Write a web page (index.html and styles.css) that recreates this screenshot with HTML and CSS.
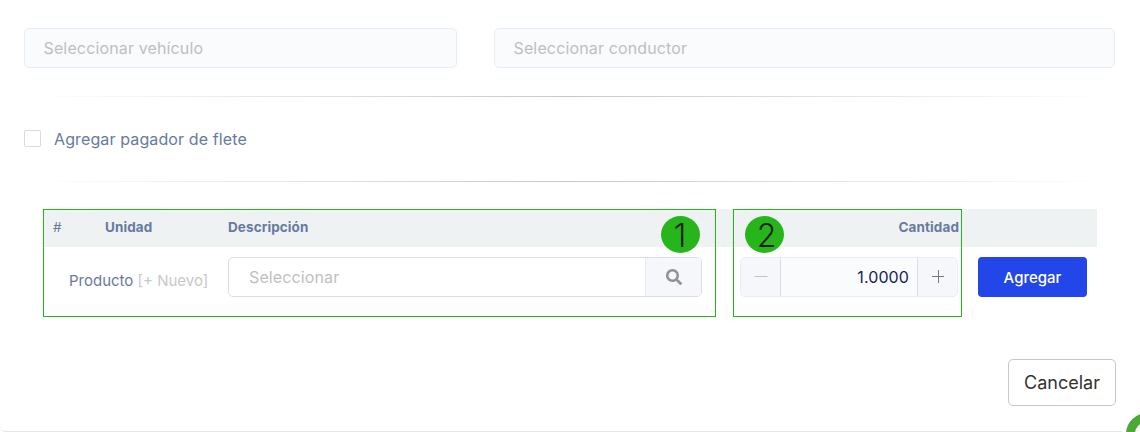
FILE: index.html
```html
<!DOCTYPE html>
<html lang="es">
<head>
<meta charset="utf-8">
<title>Agregar producto</title>
<link rel="stylesheet" href="styles.css">
</head>
<body>
<main class="panel">
  <div class="selectors">
    <div class="field">Seleccionar vehículo</div>
    <div class="field">Seleccionar conductor</div>
  </div>
  <hr class="rule">
  <label class="check"><span class="check-box"></span><span class="check-text">Agregar pagador de flete</span></label>
  <hr class="rule rule-second">
  <section class="items">
    <div class="row head">
      <span class="hash">#</span>
      <span>Unidad</span>
      <span class="col-desc">Descripción</span>
      <span class="col-qty">Cantidad</span>
    </div>
    <div class="row body">
      <span class="product">Producto <span class="new">[+ Nuevo]</span></span>
      <div class="search">
        <span class="search-text">Seleccionar</span>
        <span class="search-btn"><svg width="16" height="16" viewBox="0 0 512 512"><path fill="#8f9297" d="M505 442.700 405.300 343c-4.500-4.500-10.600-7-17-7H372c27.600-35.300 44-79.700 44-128C416 93.100 322.900 0 208 0S0 93.100 0 208s93.100 208 208 208c48.300 0 92.700-16.400 128-44v16.300c0 6.400 2.500 12.500 7 17l99.700 99.700c9.400 9.400 24.600 9.400 33.900 0l28.300-28.300c9.400-9.400 9.400-24.600.1-34zM208 336c-70.700 0-128-57.200-128-128 0-70.700 57.200-128 128-128 70.700 0 128 57.200 128 128 0 70.700-57.200 128-128 128z"/></svg></span>
      </div>
      <div class="stepper">
        <span class="step minus"><svg width="14" height="14" viewBox="0 0 14 14"><path d="M.5 6.500h13" stroke="#c0c3c7"/></svg></span>
        <span class="amount">1.0000</span>
        <span class="step plus"><svg width="14" height="14" viewBox="0 0 14 14"><path d="M1 6.500h12M7.500 0v13" stroke="#777b80"/></svg></span>
      </div>
      <div class="btn add">Agregar</div>
    </div>
    <div class="mark mark-one"><span class="badge">1</span></div>
    <div class="mark mark-two"><span class="badge">2</span></div>
  </section>
  <div class="actions"><div class="btn cancel">Cancelar</div></div>
</main>
<div class="corner"><span class="fab"></span></div>
</body>
</html>
```
FILE: styles.css
```css
* { box-sizing: border-box; }
html { overflow: hidden; }
body {
  margin: 0;
  width: 1140px;
  height: 432px;
  overflow: hidden;
  position: relative;
  background: #fff;
  color: #677a9f;
  font-family: Inter, "Liberation Sans", sans-serif;
  font-size: 16px;
}
svg { display: block; }
.panel {
  height: 432px;
  padding: 28px 25px 0 24px;
  border-bottom: 1px solid #e4e6ef;
  border-radius: 0 0 0 6px;
}
.selectors {
  display: grid;
  grid-template-columns: 433px 621px;
  gap: 37px;
}
.field {
  height: 40px;
  padding: 0 19px 0 18.5px;
  line-height: 39px;
  letter-spacing: .14px;
  border: 1px solid #e8eef7;
  border-radius: 5px;
  background: #fafbfd;
  color: #bfbfbf;
}
.rule {
  height: 1px;
  margin: 28px 0 0 9px;
  width: 1072px;
  border: 0;
  background: linear-gradient(to right, transparent, #c8c8c8, transparent);
}
.check {
  display: flex;
  gap: 13px;
  height: 20px;
  margin-top: 32px;
  line-height: 20px;
  letter-spacing: .12px;
}
.check-box {
  width: 17px;
  height: 17px;
  margin-top: 1px;
  border: 1px solid #d8d9e4;
  border-radius: 2px;
}
.rule-second { margin-top: 32px; }
.items {
  position: relative;
  width: 1054px;
  height: 108px;
  margin: 27px 0 0 19px;
}
.row { display: grid; }
.head {
  grid-template-columns: 52px 123px 500px 231px;
  height: 38px;
  padding-left: 10px;
  line-height: 36px;
  background: #eff2f3;
  font-size: 13.5px;
  font-weight: 700;
  letter-spacing: .1px;
}
.hash { font-weight: 400; }
.col-qty { text-align: right; }
.body {
  grid-template-columns: 159px 474px 218px 109px;
  padding: 10px 0 0 26px;
}
.product { font-size: 15px; line-height: 47px; }
.new { color: #c8c8c8; }
.search {
  display: flex;
  width: 474px;
  height: 40px;
  border: 1px solid #dcdde6;
  border-radius: 5px;
  overflow: hidden;
}
.search-text {
  flex: 1;
  padding-left: 20px;
  line-height: 38px;
  letter-spacing: .12px;
  color: #bfbfbf;
}
.search-btn {
  display: grid;
  place-items: center;
  width: 56px;
  border-left: 1px solid #e6eaf2;
  background: #f5f7fb;
}
.stepper {
  display: flex;
  width: 218px;
  height: 40px;
  margin-left: 38px;
  border: 1px solid #e8edf6;
  border-radius: 5px;
  background: #fafbfd;
  overflow: hidden;
}
.step {
  display: grid;
  place-items: center;
  width: 40px;
  background: #f5f7fb;
}
.minus { border-right: 1px solid #dcdde6; }
.plus { border-left: 1px solid #dcdde6; }
.amount {
  flex: 1;
  padding-right: 8px;
  line-height: 38px;
  letter-spacing: .1px;
  text-align: right;
  color: #152455;
}
.btn { text-align: center; border-radius: 4px; }
.add {
  width: 109px;
  height: 40px;
  margin-left: 58px;
  line-height: 41px;
  background: #2346e8;
  color: #fff;
  font-size: 15px;
  font-weight: 500;
}
.mark {
  position: absolute;
  top: 0;
  height: 108px;
  border: 1px solid #27b51c;
}
.mark-one { left: 0; width: 673px; }
.mark-two { left: 690px; width: 229px; }
.badge {
  position: absolute;
  top: 6px;
  width: 39px;
  height: 37px;
  border-radius: 50%;
  background: #27b51c;
  color: #1f1f1f;
  font-size: 32px;
  font-weight: 300;
  line-height: 39px;
  text-align: center;
}
.mark-one .badge { left: 617px; padding-right: 1px; }
.mark-two .badge { left: 11px; padding-left: 4px; }
.actions {
  display: flex;
  justify-content: flex-end;
  margin-top: 42px;
}
.cancel {
  width: 108px;
  height: 47px;
  margin-right: -1px;
  border: 1px solid #c8c8c8;
  border-radius: 5px;
  line-height: 46px;
  color: #333;
  font-size: 18px;
}
.corner {
  position: absolute;
  right: 0;
  bottom: 0;
  width: 18px;
  height: 22px;
  overflow: hidden;
  background: #fff;
}
.fab {
  position: absolute;
  left: 4px;
  top: 3px;
  width: 42px;
  height: 42px;
  border: 9px solid #4caa34;
  border-radius: 50%;
  background: #fff;
}
```
